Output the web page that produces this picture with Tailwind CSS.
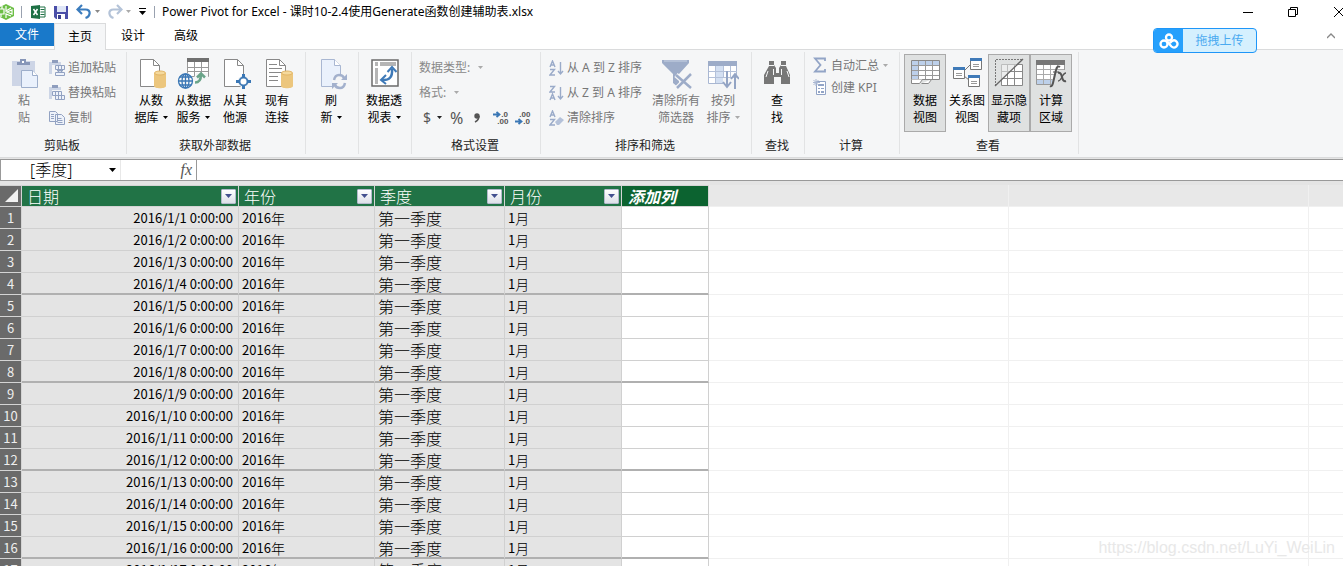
<!DOCTYPE html>
<html lang="zh-CN">
<head>
<meta charset="utf-8">
<title>Power Pivot for Excel</title>
<script src="https://cdn.jsdelivr.net/npm/@tailwindcss/browser@4"></script>
</head>
<body class="bg-white font-['Noto_Sans','Noto_Sans_CJK_SC',sans-serif] text-xs text-black">
<div class="relative flex h-screen flex-col overflow-hidden">

  <!-- Title bar -->
  <header class="flex h-[23px] shrink-0 items-center">
    <svg class="h-[18px] w-[15px] shrink-0" viewBox="0 0 15 18" aria-hidden="true"><path d="M-2 5 6 1l8 4v8l-8 4-8-4z" fill="#6cbe45"/><path d="M0 6h4v5H0M6 3v5l5-3M6 15v-4l5 2M7 9l5-2v4zM1 14v-3M2 3v3" fill="none" stroke="#fff" stroke-width="1.2"/></svg>
    <span class="ml-1.5 h-3 w-px bg-gray-400"></span>
    <svg class="ml-[9px] h-4 w-4 shrink-0" viewBox="0 0 16 16" aria-hidden="true"><path d="M0 2 9 1v14l-9-1z" fill="#1e7145"/><path d="m2.500 5 4 6m0-6-4 6" stroke="#fff" stroke-width="1.500"/><path d="M9 3h5v10H9" fill="#fff" stroke="#1e7145"/><path d="M9.500 5.500h4m-4 2.500h4m-4 2.500h4" stroke="#1e7145"/></svg>
    <button class="ml-1.5" aria-label="保存"><svg class="h-4 w-4" viewBox="0 0 16 16"><path d="M1 2h14v13H3l-2-2z" fill="#4a4ea8"/><path d="M4 2h9v6H4z" fill="#dfe6f7"/><path d="M4 10h8v5H4z" fill="#fff"/><path d="M5 11h3v4H5z" fill="#3b3f8f"/></svg></button>
    <button class="ml-[7px]" aria-label="撤消"><svg class="h-4 w-4" viewBox="0 0 16 16"><path d="M1.500 5.500h8c6 0 5 7 0 8.500M6 1 1.500 5.500 6 10" fill="none" stroke="#3b7cbd" stroke-width="2.200"/></svg></button>
    <svg class="ml-[3px] h-1 w-[5px]" viewBox="0 0 5 4" aria-hidden="true"><path d="M0 0h5L2.500 3z" fill="#888"/></svg>
    <button class="ml-[7px]" aria-label="恢复"><svg class="h-4 w-4" viewBox="0 0 16 16"><path d="M14.500 5.500h-8c-6 0-5 7 0 8.500M10 1l4.500 4.500L10 10" fill="none" stroke="#b4c3d8" stroke-width="2.200"/></svg></button>
    <svg class="ml-[3px] h-1 w-[5px]" viewBox="0 0 5 4" aria-hidden="true"><path d="M0 0h5L2.500 3z" fill="#aaa"/></svg>
    <button class="ml-2" aria-label="自定义快速访问工具栏"><svg class="h-2 w-[7px]" viewBox="0 0 7 8"><path d="M0 .5h7" stroke="#000"/><path d="M0 3h7L3.500 7z" fill="#000"/></svg></button>
    <span class="ml-2 h-3 w-px bg-gray-400"></span>
    <h1 class="ml-[7px] text-xs whitespace-nowrap">Power Pivot for Excel - 课时10-2.4使用Generate函数创建辅助表.xlsx</h1>
    <div class="ml-auto flex items-center">
      <button class="mr-[35px]" aria-label="最小化"><svg class="h-[10px] w-[10px]" viewBox="0 0 10 10"><path d="M0 5.500h10" stroke="#000"/></svg></button>
      <button class="mr-9" aria-label="还原"><svg class="h-[10px] w-[10px]" viewBox="0 0 10 10"><path d="M.5 2.500h7v7h-7zM2.500 2.500v-2h7v7h-2" fill="none" stroke="#000"/></svg></button>
      <button aria-label="关闭"><svg class="h-[10px] w-[9px]" viewBox="0 0 9 10"><path d="m0 0 10 10M10 0 0 10" stroke="#000"/></svg></button>
    </div>
  </header>

  <!-- Ribbon tabs -->
  <nav class="flex h-[26px] shrink-0 items-stretch leading-6">
    <button class="mb-[3px] w-[54px] bg-[#1979ca] text-white">文件</button>
    <button class="relative z-10 -mb-px w-[52px] border border-b-0 border-[#dadbdc] bg-[#f5f6f7]">主页</button>
    <button class="w-[54px]">设计</button>
    <button class="w-[52px]">高级</button>
    <button class="mr-2 ml-auto" aria-label="折叠功能区"><svg class="h-2 w-2" viewBox="0 0 8 8"><path d="m0 6 4-4 4 4" fill="none" stroke="#888" stroke-width="1.300"/></svg></button>
  </nav>

  <!-- Ribbon -->
  <section class="flex h-[109px] shrink-0 border-y border-[#dadbdc] bg-[#f5f6f7] pt-0.5 pb-[3px] leading-[17px]">
    <div class="flex w-[127px] shrink-0 flex-col border-r border-[#e2e3e4] pt-0.5">
      <div class="flex grow">
        <button class="ml-1 flex w-10 flex-col items-center pt-1 text-[#777]">
          <svg class="mb-0.5 h-8 w-8" viewBox="0 0 32 32"><path d="M4 3h23v25H4z" fill="#cdd5e6"/><path d="M9 7V4h3V1h6v3h4v3z" fill="#8796b8"/><path d="M14 3h2v2h-2z" fill="#fff"/><path d="M13.500 12.500h11l5 5v12h-16z" fill="#eaf1fc" stroke="#9daecb"/><path d="M24.500 12.500v5h5" fill="#fff" stroke="#9daecb"/></svg>
          <span>粘</span><span>贴</span>
        </button>
        <div class="ml-[5px] flex flex-col pt-[1px] text-[#777]">
          <button class="flex h-[25px] items-center gap-[3px]"><svg class="h-4 w-4" viewBox="0 0 16 16"><path d="M0 2h3v12H0zM3 2h9v3H3z" fill="#ccd5e6"/><path d="M3 0h6v3H3z" fill="#8e9dbd"/><path d="M6.500 5.500h9v4h-9zM9.500 5.500v4M12.500 5.500v4M6.500 12.500h9v3h-9zM8 10.500h6l-3 2z" fill="#eef2fa" stroke="#92a2c2"/></svg>追加粘贴</button>
          <button class="flex h-[25px] items-center gap-[3px]"><svg class="h-4 w-4" viewBox="0 0 16 16"><path d="M0 2h3v12H0zM3 2h9v3H3z" fill="#ccd5e6"/><path d="M3 0h6v3H3z" fill="#8e9dbd"/><path d="M3.500 6.500h9v4h-9zM6.500 10.500h9v4h-9zM6.500 6.500v4M9.500 6.500v8M12.500 10.500v4" fill="#eef2fa" stroke="#92a2c2"/></svg>替换粘贴</button>
          <button class="flex h-[25px] items-center gap-[3px]"><svg class="h-4 w-4" viewBox="0 0 16 16"><path d="M.5 1.500h6l2 2v8h-8zM6.500 4.500h6l3 3v7h-9z" fill="#eef2fa" stroke="#92a2c2"/><path d="M2 4.500h3M2 6.500h3M2 8.500h3M8.500 8.500h4M8.500 10.500h5M8.500 12.500h5" stroke="#92a2c2"/></svg>复制</button>
        </div>
      </div>
      <div class="pr-0.5 text-center text-[#222]">剪贴板</div>
    </div>

    <div class="flex w-[179px] shrink-0 flex-col border-r border-[#e2e3e4] pt-0.5">
      <div class="flex grow pl-[3px]">
        <button class="flex w-[42px] flex-col items-center pt-1">
          <svg class="mb-0.5 h-8 w-8" viewBox="0 0 32 32"><path d="M5.500 1.500h13l6 6v21h-19z" fill="#fff" stroke="#888"/><path d="M18.500 1.500v6h6" fill="none" stroke="#888"/><path d="M19 15v13c0 3 12 3 12 0V15z" fill="#ecc67d"/><ellipse cx="25" cy="15" rx="5.500" ry="2" fill="#f5d99c" stroke="#e2b565"/></svg>
          <span>从数</span><span class="flex items-center gap-1">据库<svg class="h-[3px] w-[5px]" viewBox="0 0 5 3"><path d="M0 0h5L2.500 3z"/></svg></span>
        </button>
        <button class="flex w-[42px] flex-col items-center pt-1 whitespace-nowrap">
          <svg class="mb-0.5 h-8 w-8" viewBox="0 0 32 32"><path d="M10.500 1.500h21v17h-21z" fill="#fff" stroke="#999"/><path d="M10 0h22v4H10z" fill="#707070"/><path d="M17.500 4v14M24.500 4v14M10 9.500h21M10 13.500h21" stroke="#999"/><path d="m17 20 2-5h12v16H17z" fill="#f5f6f7"/><circle cx="8" cy="23" r="8" fill="#f5f6f7"/><g fill="none" stroke="#3a77b5" stroke-width="1.300"><circle cx="8.500" cy="23" r="7"/><ellipse cx="8.500" cy="23" rx="3.500" ry="7"/><path d="M8.500 16v14M1.500 23h14M2.500 19h12M2.500 27h12"/></g><path d="M18 24.500q6 0 6-8m-4 3 4-4 4 4" fill="none" stroke="#6aa489" stroke-width="2.500"/></svg>
          <span>从数据</span><span class="flex items-center gap-1">服务<svg class="h-[3px] w-[5px]" viewBox="0 0 5 3"><path d="M0 0h5L2.500 3z"/></svg></span>
        </button>
        <button class="flex w-[42px] flex-col items-center pt-1">
          <svg class="mb-0.5 h-8 w-8" viewBox="0 0 32 32"><path d="M5.500 1.500h13l6 6v21h-19z" fill="#fff" stroke="#888"/><path d="M18.500 1.500v6h6" fill="none" stroke="#888"/><circle cx="24.500" cy="23.500" r="6" fill="#f5f6f7"/><circle cx="24.500" cy="23.500" r="4" fill="#fff" stroke="#4a80b8" stroke-width="2"/><path d="M23 16h3v4h-3zM23 27h3v4h-3zM17 22h4v3h-4zM28 22h4v3h-4z" fill="#3a77b5"/></svg>
          <span>从其</span><span>他源</span>
        </button>
        <button class="flex w-[42px] flex-col items-center pt-1">
          <svg class="mb-0.5 h-8 w-8" viewBox="0 0 32 32"><path d="M5.500 1.500h13l6 6v21h-19z" fill="#fff" stroke="#888"/><path d="M18.500 1.500v6h6M8 6.500h8M8 10.500h13M8 14.500h13M8 18.500h9M8 22.500h9" fill="none" stroke="#888"/><path d="M20 15v13c0 3 12 3 12 0V15z" fill="#ecc67d"/><ellipse cx="26" cy="15" rx="5.500" ry="2" fill="#f5d99c" stroke="#e2b565"/></svg>
          <span>现有</span><span>连接</span>
        </button>
      </div>
      <div class="pr-0.5 text-center text-[#222]">获取外部数据</div>
    </div>

    <div class="flex w-[53px] shrink-0 justify-center border-r border-[#e2e3e4] pt-0.5 pr-0.5">
      <button class="flex w-[42px] flex-col items-center pt-1">
        <svg class="mb-0.5 h-8 w-8" viewBox="0 0 32 32"><path d="M6.500 1.500h13l6 6v21h-19z" fill="#eaf1fc" stroke="#a9b7d2"/><path d="M19.500 1.500v6h6" fill="#fff" stroke="#a9b7d2"/><circle cx="24.500" cy="23.500" r="7.500" fill="#f5f6f7"/><path d="M19 22q1-5 5-5 4 0 5 3M30 25q-1 5-5 5-4 0-5-3" fill="none" stroke="#a3b1cd" stroke-width="2.500"/><path d="M32 16v6h-6zM17 31v-6h6z" fill="#a3b1cd"/></svg>
        <span>刷</span><span class="flex items-center gap-1">新<svg class="h-[3px] w-[5px]" viewBox="0 0 5 3"><path d="M0 0h5L2.500 3z"/></svg></span>
      </button>
    </div>

    <div class="flex w-[53px] shrink-0 justify-center border-r border-[#e2e3e4] pt-0.5 pr-0.5">
      <button class="flex w-[42px] flex-col items-center pt-1">
        <svg class="mb-0.5 h-8 w-8" viewBox="0 0 32 32"><path d="M4 2h26v26H4z" fill="#fff" stroke="#6b6b6b" stroke-width="1.500"/><path d="M7 4h3v4H7zM12 4h16v4H12zM7 10h3v16H7z" fill="#b5b5b5"/><path d="M14 22q11 1 10-11" fill="none" stroke="#3f7ab8" stroke-width="2.500"/><path d="m19.500 14 4.500-5 4.500 5M18 17l-5 5 5 4" fill="none" stroke="#3f7ab8" stroke-width="2"/></svg>
        <span class="whitespace-nowrap">数据透</span><span class="flex items-center gap-1">视表<svg class="h-[3px] w-[5px]" viewBox="0 0 5 3"><path d="M0 0h5L2.500 3z"/></svg></span>
      </button>
    </div>

    <div class="flex w-[129px] shrink-0 flex-col border-r border-[#e2e3e4] pt-0.5">
      <div class="flex grow flex-col pt-[1px] pl-[7px]">
        <button class="flex h-[25px] items-center gap-2 text-[#888]">数据类型:<svg class="h-[3px] w-[5px]" viewBox="0 0 5 3"><path d="M0 0h5L2.500 3z" fill="#aaa"/></svg></button>
        <button class="flex h-[25px] items-center gap-2 text-[#888]">格式:<svg class="h-[3px] w-[5px]" viewBox="0 0 5 3"><path d="M0 0h5L2.500 3z" fill="#aaa"/></svg></button>
        <div class="flex h-[25px] items-center pl-1 text-[#555]">
          <button class="flex items-center gap-1.5 text-sm">$<svg class="h-[3px] w-[5px]" viewBox="0 0 5 3"><path d="M0 0h5L2.500 3z" fill="#222"/></svg></button>
          <button class="ml-2 text-base">%</button>
          <button class="ml-2.5" aria-label="千位分隔样式"><svg class="h-[10px] w-2" viewBox="0 0 8 10"><circle cx="4" cy="3" r="2.700" fill="#555"/><path d="M6 3q0 4-4 6" fill="none" stroke="#555" stroke-width="1.500"/></svg></button>
          <button class="ml-3 flex w-4 flex-col font-['Liberation_Sans'] text-[8px] leading-[7px] font-bold" aria-label="增加小数位数"><span class="flex items-center"><svg class="h-[7px] w-2" viewBox="0 0 8 7"><path d="M0 3.500h6M3.500 1 6.500 3.500 3.500 6" fill="none" stroke="#3a77b5" stroke-width="1.800"/></svg>.0</span><span class="pl-[3px]">.00</span></button>
          <button class="ml-1.5 flex w-4 flex-col font-['Liberation_Sans'] text-[8px] leading-[7px] font-bold" aria-label="减少小数位数"><span class="pl-[3px]">.00</span><span class="flex items-center"><svg class="h-[7px] w-2" viewBox="0 0 8 7"><path d="M0 3.500h6M3.500 1 6.500 3.500 3.500 6" fill="none" stroke="#3a77b5" stroke-width="1.800"/></svg>.0</span></button>
        </div>
      </div>
      <div class="pr-0.5 text-center text-[#222]">格式设置</div>
    </div>

    <div class="flex w-[211px] shrink-0 flex-col border-r border-[#e2e3e4] pt-0.5">
      <div class="flex grow text-[#777]">
        <div class="flex w-[108px] flex-col pt-[1px] pl-2 whitespace-nowrap">
          <button class="flex h-[25px] items-center gap-[3px]"><svg class="h-4 w-[15px]" viewBox="0 0 15 16"><path d="m1 7 2.500-6L6 7M2 5h3M1 9.500h4.500L1 15h5M11.500 2v12M9 11l2.500 3 2.500-3" fill="none" stroke="#9aabc9" stroke-width="1.400"/></svg>从 A 到 Z 排序</button>
          <button class="flex h-[25px] items-center gap-[3px]"><svg class="h-4 w-[15px]" viewBox="0 0 15 16"><path d="m1 15 2.500-6L6 15M2 13h3M1 1.500h4.500L1 7h5M11.500 2v12M9 11l2.500 3 2.500-3" fill="none" stroke="#9aabc9" stroke-width="1.400"/></svg>从 Z 到 A 排序</button>
          <button class="flex h-[25px] items-center gap-[3px]"><svg class="h-4 w-[15px]" viewBox="0 0 15 16"><path d="m1 7 2.500-6L6 7M2 5h3M1 9.500h4.500L1 15h5" fill="none" stroke="#9aabc9" stroke-width="1.400"/><path d="m6 12 5-5 4 3-5 5H8z" fill="#b4c1d9"/></svg>清除排序</button>
        </div>
        <button class="flex w-[54px] flex-col items-center pt-1 whitespace-nowrap">
          <svg class="mb-0.5 h-8 w-8" viewBox="0 0 32 32"><path d="M2 2h27v3L19 16v14l-6-5v-9L2 5z" fill="#9dacc8"/><path d="M4 3h23" stroke="#c9d3e4"/><path d="m16 17 15 13M31 16 17 30" stroke="#f5f6f7" stroke-width="5"/><path d="m16 17 15 13M31 16 17 30" stroke="#9dacc8" stroke-width="2.500"/></svg>
          <span>清除所有</span><span>筛选器</span>
        </button>
        <button class="flex w-10 flex-col items-center pt-1">
          <svg class="mb-0.5 h-8 w-8" viewBox="0 0 32 32"><path d="M1.500 3.500h28v22h-28z" fill="#fff" stroke="#a9b7d2"/><path d="M1 3h29v5H1z" fill="#9dacc8"/><path d="M9 8h7v17H9z" fill="#d4e0f2"/><path d="M8.500 8v17M16.500 8v17M23.500 8v17M2 13.500h28M2 19.500h28" stroke="#b4c1d9"/><path d="M16 20h16v11H16z" fill="#f5f6f7"/><path d="M20 13v15m-4-4 4 5 4-5M28 31V16m-4 5 4-5 4 5" fill="none" stroke="#93a4c4" stroke-width="2"/></svg>
          <span>按列</span><span class="flex items-center gap-1">排序<svg class="h-[3px] w-[5px]" viewBox="0 0 5 3"><path d="M0 0h5L2.500 3z" fill="#aaa"/></svg></span>
        </button>
      </div>
      <div class="pr-0.5 text-center text-[#222]">排序和筛选</div>
    </div>

    <div class="flex w-[53px] shrink-0 flex-col items-center border-r border-[#e2e3e4] pt-0.5 pr-0.5">
      <button class="flex w-[42px] grow flex-col items-center pt-1">
        <svg class="mb-0.5 h-8 w-8" viewBox="0 0 32 32"><g fill="#777"><path d="M8 3h5v4l2 3v5h3v-5l2-3V3h5v5l4 9v9h-9v-7h-7v7H3v-9l5-9z"/></g><path d="M8 7.500h5M20 7.500h5M7 13l-2 6M12.500 11v6M20.500 11v6M26 13l2 6" stroke="#f5f6f7"/></svg>
        <span>查</span><span>找</span>
      </button>
      <div class="text-[#222]">查找</div>
    </div>

    <div class="flex w-[95px] shrink-0 flex-col border-r border-[#e2e3e4] pt-0.5">
      <div class="flex grow flex-col pl-2 text-[#777]">
        <button class="flex h-[22px] items-center gap-1"><svg class="h-4 w-[14px]" viewBox="0 0 14 16"><path d="M12 4V1.500H2L7.500 8 2 14.500h10V12" fill="none" stroke="#92a4c6" stroke-width="1.800"/></svg>自动汇总<svg class="h-[3px] w-[5px]" viewBox="0 0 5 3"><path d="M0 0h5L2.500 3z" fill="#aaa"/></svg></button>
        <button class="flex h-[22px] items-center gap-1"><svg class="h-4 w-[14px]" viewBox="0 0 14 16"><path d="M3.500 2.500h9v13h-9z" fill="#fff" stroke="#92a4c6"/><path d="M5 5h6v2H5zM5 9h2v1H5zM8 9h3v1H8zM5 12h2v2H5zM8 12h3v2H8z" fill="#92a4c6"/><path d="M3 0v7M0 3.500h7M.5 1l5 5M5.500 1l-5 5" stroke="#a9b7d2"/></svg>创建 KPI</button>
      </div>
      <div class="pr-0.5 text-center text-[#222]">计算</div>
    </div>

    <div class="flex w-[179px] shrink-0 flex-col border-r border-[#e2e3e4] pt-0.5">
      <div class="flex grow items-start pl-1">
        <button class="flex h-[78px] w-[42px] flex-col items-center border border-[#aaa] bg-[#dfe1e1] pt-[3px]">
          <svg class="mb-0.5 h-8 w-8 shrink-0" viewBox="0 0 32 32"><path d="M2.500 2.500h28v19h-28z" fill="#fff" stroke="#888"/><path d="M3 3h27v5H3zM3 8h6v13H3z" fill="#bdd0ea"/><path d="M9.500 3v18M16.500 3v18M23.500 3v18M3 7.500h27M3 12.500h27M3 17.500h27" stroke="#999"/><path d="M2.500 21.500v4h8l3-4m-1 4h7l3-4" fill="#fff" stroke="#888"/></svg>
          <span>数据</span><span>视图</span>
        </button>
        <button class="flex h-[78px] w-[42px] flex-col items-center pt-1 whitespace-nowrap">
          <svg class="mb-0.5 h-8 w-8 shrink-0" viewBox="0 0 32 32"><path d="m13 13 6-6M13 18l5 4" stroke="#777"/><path d="M2.500 10.500h11v10h-11zM19.500 1.500h11v10h-11zM17.500 18.500h11v10h-11z" fill="#fff" stroke="#777"/><path d="M2 9h12v3H2zM19 0h12v3H19zM17 17h12v3H17z" fill="#3f7ab8"/><path d="M5 15.500h6M5 17.500h6M22 6.500h6M22 8.500h6M20 23.500h6M20 25.500h6" stroke="#999"/></svg>
          <span>关系图</span><span>视图</span>
        </button>
        <button class="flex h-[78px] w-[42px] flex-col items-center border border-[#aaa] bg-[#dfe1e1] pt-[3px] whitespace-nowrap">
          <svg class="mb-0.5 h-8 w-8 shrink-0" viewBox="0 0 32 32"><path d="M8.500 6.500h21v21h-21z" fill="#fff" stroke="#888"/><path d="M14.500 7v20M21.500 7v20M9 13.500h20M9 20.500h20" stroke="#888"/><path d="M2 28V2h26z" fill="#dfe1e1" opacity=".6"/><path d="M2.500 28V1.500H29" fill="none" stroke="#777" stroke-dasharray="2 1"/><path d="M2 28 30 1" stroke="#666" stroke-width="1.300"/></svg>
          <span>显示隐</span><span>藏项</span>
        </button>
        <button class="flex h-[78px] w-[42px] flex-col items-center border border-[#aaa] bg-[#dfe1e1] pt-[3px]">
          <svg class="mb-0.5 h-8 w-8 shrink-0" viewBox="0 0 32 32"><path d="M1.500 3.500h28v23h-28z" fill="#fff" stroke="#999"/><path d="M1 2h29v5H1z" fill="#777"/><path d="M2 21h27v5H2z" fill="#bdd0ea"/><path d="M8.500 7v19M15.500 7v19M22.500 7v19M2 11.500h27M2 16.500h27M2 21.500h27" stroke="#aaa"/><path d="M20 12h12v15H16z" fill="#dfe1e1"/><g fill="none" stroke="#555"><path d="M25 9q-3-2-4 3l-3 13q-1 4-3 3" stroke-width="2"/><path d="M18 14h6"/><path d="M23 15q3-1 4 4t4 4" stroke-width="2"/><path d="M31 15q-2 0-4 4t-4 4" stroke-width="1.300"/></g></svg>
          <span>计算</span><span>区域</span>
        </button>
      </div>
      <div class="pr-0.5 text-center text-[#222]">查看</div>
    </div>
  </section>

  <!-- Formula bar -->
  <div class="flex h-[27px] shrink-0 bg-[#e4e4e4] pt-px pb-1">
    <div class="flex grow border-y border-[#999] bg-white">
      <label class="relative flex w-[121px] items-center border-r border-l border-r-[#e8e8e8] border-l-[#999]">
        <select aria-label="名称框" class="h-full w-full appearance-none pl-[29px] text-base leading-5 font-light"><option>[季度]</option></select>
        <svg class="pointer-events-none absolute right-1 h-1 w-[7px]" viewBox="0 0 7 4"><path d="M0 0h7L3.500 4z"/></svg>
      </label>
      <span class="flex w-[76px] items-center justify-end border-r border-[#999] pr-1 font-['Liberation_Serif'] text-base text-[#555] italic">fx</span>
      <input aria-label="编辑栏" class="min-w-0 grow px-1 outline-none">
    </div>
  </div>

  <!-- Data grid -->
  <table class="w-full shrink-0 table-fixed border-separate border-spacing-0 font-['Noto_Sans_CJK_SC',sans-serif]">
    <colgroup><col class="w-[22px]"><col class="w-[217px]"><col class="w-[136px]"><col class="w-[130px]"><col class="w-[117px]"><col class="w-[87px]"><col class="w-[300px]"><col class="w-[300px]"><col></colgroup>
    <thead>
      <tr id="head" class="h-[22px] text-left text-base leading-5 text-white"></tr>
    </thead>
    <tbody id="body"></tbody>
  </table>

  <button class="absolute top-7 right-[86px] flex h-[25px] w-[104px] items-center overflow-hidden rounded border border-[#1e96f8] bg-[#d5f0fe] text-[#4aaaf0]">
    <span class="flex h-full w-[29px] items-center justify-center bg-[#26a0fc]"><svg class="h-4 w-5" viewBox="0 0 20 16"><g fill="none" stroke="#fff" stroke-width="2.300"><circle cx="10" cy="4.500" r="3"/><circle cx="5" cy="11" r="3.500"/><path d="m8 8.500 4.500 5a3.500 3.500 0 1 0 .5-5.500l-2 2"/></g></svg></span>
    <span class="grow text-center">拖拽上传</span>
  </button>
  <div class="absolute right-2 bottom-2 font-['Liberation_Sans'] text-base leading-5 text-[#e8e8e8]">https://blog.csdn.net/LuYi_WeiLin</div>
</div>
<script>
  const arrow = '<button aria-label="筛选" class="flex h-[15px] w-[15px] items-center justify-center rounded-[1px] border border-[#b4b9cc] bg-linear-to-b from-white to-[#dde0e8]"><svg class="h-1 w-[7px]" viewBox="0 0 7 4"><path d="M0 0h7L3.500 4z" fill="#43508f"/></svg></button>';
  const heads = ['日期', '年份', '季度', '月份'];
  const blankHead = '<td class="border-r border-b border-[#f0f0f0] bg-[#e8e8e8]"></td>';
  const blank = '<td class="border-r border-b border-[#f0f0f0]"></td>';
  document.getElementById('head').innerHTML =
    '<th class="border-t border-r border-b border-[#d4d4d4] bg-[#6a6a6a] p-0"><svg class="ml-1 h-4 w-4" viewBox="0 0 16 16"><path d="M14 1v13H1z" fill="#f2f2f2"/></svg></th>' +
    heads.map(h => '<th class="border-t border-r border-b border-[#d4d4d4] bg-[#217346] py-0 pr-0.5 pl-[5px] font-light"><div class="flex h-5 items-center justify-between">' + h + arrow + '</div></th>').join('') +
    '<th class="border-t border-r border-b border-[#d4d4d4] bg-[#0c6330] py-0 pl-[6px] font-bold italic">添加列</th>' +
    blankHead.repeat(2) + '<td class="border-b border-[#f0f0f0] bg-[#e8e8e8]"></td>';
  let rows = '';
  for (let i = 1; i <= 17; i++) {
    const line = i % 4 ? 'border-b-[#d0d0d0]' : 'border-b-[#b0b0b0] shadow-[inset_0_-1px_#b0b0b0]';
    const cell = 'h-[22px] border-r border-b border-r-[#d0d0d0] py-0 ' + line;
    rows += '<tr class="text-[13px] leading-5">' +
      '<th class="border-r border-b border-[#d4d4d4] bg-[#6a6a6a] p-0 text-center font-normal text-[#eee]">' + i + '</th>' +
      '<td class="bg-[#e4e4e4] pr-[5px] text-right ' + cell + '">2016/1/' + i + ' 0:00:00</td>' +
      '<td class="bg-[#e4e4e4] pl-[3px] ' + cell + '"><div class="flex h-5">2016<span class="text-sm leading-5 font-light">年</span></div></td>' +
      '<td class="bg-[#e4e4e4] pl-[3px] ' + cell + '"><div class="h-5 text-base leading-5 font-light">第一季度</div></td>' +
      '<td class="bg-[#e4e4e4] pl-[3px] ' + cell + '"><div class="flex h-5">1<span class="text-sm leading-5 font-light">月</span></div></td>' +
      '<td class="' + cell + '"></td>' +
      blank.repeat(2) + '<td class="border-b border-[#f0f0f0]"></td></tr>';
  }
  document.getElementById('body').innerHTML = rows;
</script>
</body>
</html>
